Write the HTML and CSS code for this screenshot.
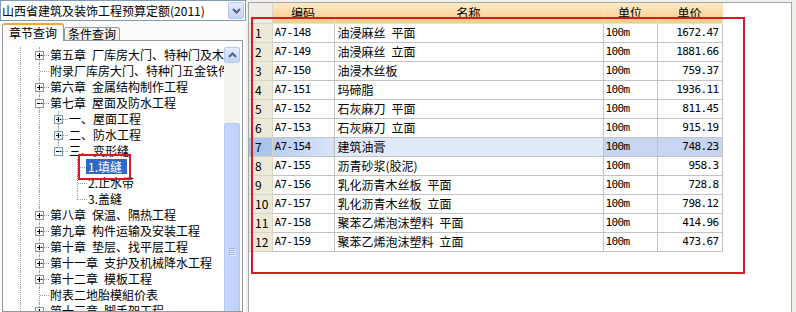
FILE: index.html
```html
<!DOCTYPE html>
<html lang="zh-CN">
<head>
    <meta charset="UTF-8">
    <meta name="viewport" content="width=device-width, initial-scale=1.0">
    <title>定额查询</title>
    <link rel="stylesheet" href="styles.css">
</head>
<body>

    <div class="left">
        <!-- quota book selector -->
        <div class="combo">
            <span class="combo-text">山西省建筑及装饰工程预算定额(2011)</span>
            <span class="combo-btn">
                <svg width="9" height="6" viewBox="0 0 9 6"><path d="M1 1l3.5 3.5L8 1" fill="none" stroke="#4d6185" stroke-width="2"/></svg>
            </span>
        </div>

        <div class="tabs">
            <span class="tab active">章节查询</span>
            <span class="tab">条件查询</span>
        </div>

        <div class="panel">
            <div class="treebox">
                <div class="tree">
                    <div class="node"><span class="ind l"></span><span class="ind t"><svg class="box" viewBox="0 0 9 9"><rect x=".5" y=".5" width="8" height="8"/><path d="M2 4.5h5M4.5 2v5"/></svg></span><span class="label">第五章&ensp;厂库房大门、特种门及木结构工程</span></div>
                    <div class="node"><span class="ind l"></span><span class="ind t"></span><span class="label">附录厂库房大门、特种门五金铁件</span></div>
                    <div class="node"><span class="ind l"></span><span class="ind t"><svg class="box" viewBox="0 0 9 9"><rect x=".5" y=".5" width="8" height="8"/><path d="M2 4.5h5M4.5 2v5"/></svg></span><span class="label">第六章&ensp;金属结构制作工程</span></div>
                    <div class="node"><span class="ind l"></span><span class="ind t"><svg class="box" viewBox="0 0 9 9"><rect x=".5" y=".5" width="8" height="8"/><path d="M2 4.5h5"/></svg></span><span class="label">第七章&ensp;屋面及防水工程</span></div>
                    <div class="node"><span class="ind l"></span><span class="ind l"></span><span class="ind t"><svg class="box" viewBox="0 0 9 9"><rect x=".5" y=".5" width="8" height="8"/><path d="M2 4.5h5M4.5 2v5"/></svg></span><span class="label">一、屋面工程</span></div>
                    <div class="node"><span class="ind l"></span><span class="ind l"></span><span class="ind t"><svg class="box" viewBox="0 0 9 9"><rect x=".5" y=".5" width="8" height="8"/><path d="M2 4.5h5M4.5 2v5"/></svg></span><span class="label">二、防水工程</span></div>
                    <div class="node"><span class="ind l"></span><span class="ind l"></span><span class="ind e"><svg class="box" viewBox="0 0 9 9"><rect x=".5" y=".5" width="8" height="8"/><path d="M2 4.5h5"/></svg></span><span class="label">三、变形缝</span></div>
                    <div class="node"><span class="ind l"></span><span class="ind l"></span><span class="ind"></span><span class="ind t"></span><span class="label sel">1.填缝</span></div>
                    <div class="node"><span class="ind l"></span><span class="ind l"></span><span class="ind"></span><span class="ind t"></span><span class="label">2.止水带</span></div>
                    <div class="node"><span class="ind l"></span><span class="ind l"></span><span class="ind"></span><span class="ind e"></span><span class="label">3.盖缝</span></div>
                    <div class="node"><span class="ind l"></span><span class="ind t"><svg class="box" viewBox="0 0 9 9"><rect x=".5" y=".5" width="8" height="8"/><path d="M2 4.5h5M4.5 2v5"/></svg></span><span class="label">第八章&ensp;保温、隔热工程</span></div>
                    <div class="node"><span class="ind l"></span><span class="ind t"><svg class="box" viewBox="0 0 9 9"><rect x=".5" y=".5" width="8" height="8"/><path d="M2 4.5h5M4.5 2v5"/></svg></span><span class="label">第九章&ensp;构件运输及安装工程</span></div>
                    <div class="node"><span class="ind l"></span><span class="ind t"><svg class="box" viewBox="0 0 9 9"><rect x=".5" y=".5" width="8" height="8"/><path d="M2 4.5h5M4.5 2v5"/></svg></span><span class="label">第十章&ensp;垫层、找平层工程</span></div>
                    <div class="node"><span class="ind l"></span><span class="ind t"><svg class="box" viewBox="0 0 9 9"><rect x=".5" y=".5" width="8" height="8"/><path d="M2 4.5h5M4.5 2v5"/></svg></span><span class="label">第十一章&ensp;支护及机械降水工程</span></div>
                    <div class="node"><span class="ind l"></span><span class="ind t"><svg class="box" viewBox="0 0 9 9"><rect x=".5" y=".5" width="8" height="8"/><path d="M2 4.5h5M4.5 2v5"/></svg></span><span class="label">第十二章&ensp;模板工程</span></div>
                    <div class="node"><span class="ind l"></span><span class="ind t"></span><span class="label">附表二地胎模組价表</span></div>
                    <div class="node"><span class="ind l"></span><span class="ind t"><svg class="box" viewBox="0 0 9 9"><rect x=".5" y=".5" width="8" height="8"/><path d="M2 4.5h5M4.5 2v5"/></svg></span><span class="label">第十三章&ensp;脚手架工程</span></div>

                    <!-- hand-drawn marker round the picked node -->
                    <div class="mark"></div>
                </div>

                <div class="vscroll">
                    <div class="sb-btn">
                        <svg width="9" height="6" viewBox="0 0 9 6"><path d="M1 5l3.5-3.5L8 5" fill="none" stroke="#4d6185" stroke-width="2"/></svg>
                    </div>
                    <div class="sb-track">
                        <div class="sb-thumb">
                            <svg width="7" height="8" viewBox="0 0 7 8"><path d="M0 .5h6M0 2.5h6M0 4.5h6M0 6.5h6" stroke="#8fb0ef"/><path d="M1 1.5h6M1 3.5h6M1 5.5h6M1 7.5h6" stroke="#eef3fe"/></svg>
                        </div>
                    </div>
                </div>
            </div>
        </div>
    </div>

    <div class="right">
        <table class="grid">
            <colgroup>
                <col style="width: 23px">
                <col style="width: 62px">
                <col style="width: 269px">
                <col style="width: 54px">
                <col style="width: 65px">
            </colgroup>
            <thead>
                <tr><th class="rn"></th><th>编码</th><th>名称</th><th>单位</th><th>单价</th></tr>
            </thead>
            <tbody>
                <tr><td class="rn">1</td><td class="code">A7-148</td><td class="name">油浸麻丝&ensp;平面</td><td class="unit">100m</td><td class="price">1672.47</td></tr>
                <tr><td class="rn">2</td><td class="code">A7-149</td><td class="name">油浸麻丝&ensp;立面</td><td class="unit">100m</td><td class="price">1881.66</td></tr>
                <tr><td class="rn">3</td><td class="code">A7-150</td><td class="name">油浸木丝板</td><td class="unit">100m</td><td class="price">759.37</td></tr>
                <tr><td class="rn">4</td><td class="code">A7-151</td><td class="name">玛碲脂</td><td class="unit">100m</td><td class="price">1936.11</td></tr>
                <tr><td class="rn">5</td><td class="code">A7-152</td><td class="name">石灰麻刀&ensp;平面</td><td class="unit">100m</td><td class="price">811.45</td></tr>
                <tr><td class="rn">6</td><td class="code">A7-153</td><td class="name">石灰麻刀&ensp;立面</td><td class="unit">100m</td><td class="price">915.19</td></tr>
                <tr class="cur"><td class="rn">7</td><td class="code">A7-154</td><td class="name">建筑油膏</td><td class="unit">100m</td><td class="price">748.23</td></tr>
                <tr><td class="rn">8</td><td class="code">A7-155</td><td class="name">沥青砂浆(胶泥)</td><td class="unit">100m</td><td class="price">958.3</td></tr>
                <tr><td class="rn">9</td><td class="code">A7-156</td><td class="name">乳化沥青木丝板&ensp;平面</td><td class="unit">100m</td><td class="price">728.8</td></tr>
                <tr><td class="rn">10</td><td class="code">A7-157</td><td class="name">乳化沥青木丝板&ensp;立面</td><td class="unit">100m</td><td class="price">798.12</td></tr>
                <tr><td class="rn">11</td><td class="code">A7-158</td><td class="name">聚苯乙烯泡沫塑料&ensp;平面</td><td class="unit">100m</td><td class="price">414.96</td></tr>
                <tr><td class="rn">12</td><td class="code">A7-159</td><td class="name">聚苯乙烯泡沫塑料&ensp;立面</td><td class="unit">100m</td><td class="price">473.67</td></tr>
            </tbody>
        </table>

        <!-- marker drawn over the result list -->
        <div class="mark-big"></div>
    </div>

</body>
</html>
```

FILE: styles.css
```css
* {
    box-sizing: border-box;
}

body {
    margin: 0;
    width: 796px;
    height: 312px;
    overflow: hidden;
    display: flex;
    background: #f1efe8;
    font-family: "Noto Sans CJK SC", sans-serif;
    font-size: 12px;
    color: #000;
}

/* ---------- left side ---------- */

.left {
    width: 246px;
    flex: none;
    display: flex;
    flex-direction: column;
    background: #fbfbf9;
}

.combo {
    height: 21px;
    display: flex;
    align-items: center;
    border: 1px solid #7f9db9;
    background: #fff;
    padding-left: 1px;
    margin-bottom: 2px;
}

.combo-text {
    flex: 1;
    white-space: nowrap;
    overflow: hidden;
    line-height: 17px;
}

.combo-btn,
.sb-btn {
    width: 16px;
    height: 17px;
    margin-right: 1px;
    display: flex;
    align-items: center;
    justify-content: center;
    border: 1px solid #b7c7ee;
    border-radius: 2px;
    background: linear-gradient(#e4ecfd, #c2d3f8);
}

.tabs {
    height: 18px;
    margin: 0 3px 0 2px;
    display: flex;
    align-items: flex-end;
    border-bottom: 1px solid #919b9c;
}

.tab {
    height: 13px;
    line-height: 12px;
    padding: 0 3px;
    border: 1px solid #919b9c;
    border-bottom: none;
    border-radius: 3px 3px 0 0;
    background: linear-gradient(#fefefe, #eceae3);
    white-space: nowrap;
}

.tab.active {
    height: 18px;
    line-height: 15px;
    padding: 0 6px;
    margin-bottom: -1px;
    border-top: 2px solid #f3a43a;
    background: #fcfcfe;
}

.panel {
    flex: 1;
    min-height: 0;
    margin: 0 3px 0 2px;
    padding: 6px 2px 0 2px;
    border: 1px solid #919b9c;
    border-top: none;
    background: #fcfcfe;
}

.treebox {
    height: 100%;
    display: flex;
    background: #fff;
}

.tree {
    flex: 1;
    min-width: 0;
    overflow: hidden;
    padding-left: 6px;
    position: relative;
}

.node {
    height: 16px;
    display: flex;
    white-space: nowrap;
}

/* indent cells with the dotted tree lines */
.ind {
    width: 19px;
    height: 16px;
    flex: none;
    display: grid;
}

.ind > *,
.ind::before,
.ind::after {
    grid-area: 1 / 1;
}

.ind.l::before,
.ind.t::before,
.ind.e::before {
    content: "";
    width: 0;
    height: 16px;
    margin-left: 9px;
    border-left: 1px dotted #a0a0a0;
}

.ind.e::before {
    height: 9px;
}

.ind.t::after,
.ind.e::after {
    content: "";
    height: 0;
    width: 9px;
    margin: 8px 0 0 10px;
    border-top: 1px dotted #a0a0a0;
    align-self: start;
}

.box {
    width: 9px;
    height: 9px;
    margin: 4px 0 0 5px;
}

.box rect {
    fill: #f7f7f4;
    stroke: #7a98af;
}

.box path {
    stroke: #000;
}

.label {
    line-height: 16px;
    padding: 0 2px;
    margin-left: -1px;
}

.label.sel {
    height: 15px;
    line-height: 15px;
    padding: 0 5px 0 2px;
    background: #316ac5;
    color: #fff;
}

.mark {
    position: absolute;
    left: 73px;
    top: 107px;
    width: 53px;
    height: 26px;
    border: 2px solid #d41c20;
}

.vscroll {
    width: 16px;
    flex: none;
    display: flex;
    flex-direction: column;
}

.sb-btn {
    height: 16px;
    margin: 0;
}

.sb-track {
    flex: 1;
    min-height: 0;
    overflow: hidden;
    padding-top: 60px;
    background: #f4f3ee;
}

.sb-thumb {
    height: 258px;
    display: flex;
    align-items: center;
    justify-content: center;
    border: 1px solid #b3c7f4;
    border-radius: 2px;
    background: linear-gradient(90deg, #c9d8fc, #bdd0fb);
}

/* ---------- right side ---------- */

.right {
    flex: 1;
    margin: 2px 4px 0 2px;
    border: 1px solid #a0a8b0;
    border-bottom: none;
    background: #fff;
    position: relative;
}

.grid {
    border-collapse: collapse;
    table-layout: fixed;
    width: 473px;
}

.grid th,
.grid td {
    border: 1px solid #c3c3c3;
    padding: 0 2px;
    white-space: nowrap;
    overflow: hidden;
    font-weight: normal;
}

.grid th {
    height: 20px;
    border-top: none;
    border-color: #f9e2b9;
    background: linear-gradient(#fde9c7, #f7cb86);
    text-align: center;
}

.grid tr > :first-child {
    border-left: none;
}

.grid td {
    height: 19px;
}

.grid .rn {
    padding-left: 6px;
    background: #ece9d8;
    border-color: #d9d5c6;
}

.grid th.rn {
    background: #efede6;
}

.code,
.unit,
.price {
    font-family: "DejaVu Sans Mono", monospace;
    font-size: 11px;
    letter-spacing: -0.6px;
}

.grid .name {
    padding-left: 3px;
}

.grid .price {
    text-align: right;
    padding-right: 3px;
}

.cur td.rn {
    background: #abc4eb;
}

.cur td.code {
    background: linear-gradient(90deg, #b7cdf1, #d8e4f7);
}

.cur td.name {
    background: #e0eaf8;
}

.cur td.unit,
.cur td.price {
    background: #c6d6f0;
}

.mark-big {
    position: absolute;
    left: 2px;
    top: 14px;
    width: 494px;
    height: 257px;
    border: 2px solid #d41c20;
}
```
